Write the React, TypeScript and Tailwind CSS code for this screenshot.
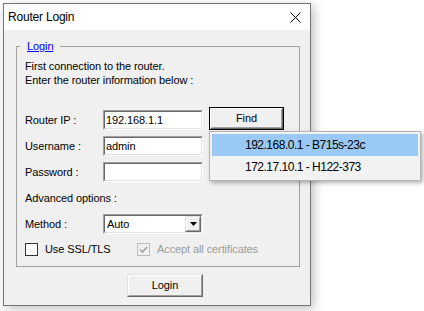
import React from "react";

const font = { fontFamily: '"Liberation Sans", Arial, sans-serif' };

function Sunken({ className = "", children }: { className?: string; children?: React.ReactNode }) {
  return (
    <div className={`border border-t-[#a0a0a0] border-l-[#a0a0a0] border-b-white border-r-white ${className}`}>
      <div className="h-full w-full border border-t-[#696969] border-l-[#696969] border-b-[#e3e3e3] border-r-[#e3e3e3] bg-white flex items-center">
        {children}
      </div>
    </div>
  );
}

function Raised({ className = "", children, focus = false }: { className?: string; children?: React.ReactNode; focus?: boolean }) {
  if (focus) {
    return (
      <div className={`border border-black ${className}`}>
        <div className="h-full w-full border border-t-white border-l-white border-b-[#696969] border-r-[#696969]">
          <div className="h-full w-full border border-t-[#f0f0f0] border-l-[#f0f0f0] border-b-[#a0a0a0] border-r-[#a0a0a0] bg-[#f0f0f0] flex items-center justify-center">
            {children}
          </div>
        </div>
      </div>
    );
  }
  return (
    <div className={`border border-t-[#e3e3e3] border-l-[#e3e3e3] border-b-[#696969] border-r-[#696969] ${className}`}>
      <div className="h-full w-full border border-t-white border-l-white border-b-[#a0a0a0] border-r-[#a0a0a0] bg-[#f0f0f0] flex items-center justify-center">
        {children}
      </div>
    </div>
  );
}

function Row({ label, children, mt = "mt-[6px]" }: { label: string; children?: React.ReactNode; mt?: string }) {
  return (
    <div className={`flex items-center h-[20px] ${mt}`}>
      <div className="w-[78px] shrink-0">{label}</div>
      {children}
    </div>
  );
}

export default function App() {
  return (
    <div className="relative w-[424px] h-[311px] bg-white pt-[3px] pl-[3px] text-[11px] leading-[13px] tracking-[-0.1px] text-black" style={font}>
      <div className="w-[308px] h-[303px] border border-[#767676] bg-[#f0f0f0] shadow-[3px_3px_10px_rgba(0,0,0,0.25)] flex flex-col">
        <div className="h-[26px] bg-white flex items-center justify-between shrink-0">
          <span className="pl-[4px] text-[12px] tracking-[-0.2px]">Router Login</span>
          <svg width="11" height="11" viewBox="0 0 11 11" className="mr-[9px]">
            <path d="M0.5 0.5 L10.5 10.5 M10.5 0.5 L0.5 10.5" stroke="#000" strokeWidth="1" />
          </svg>
        </div>
        <div className="pl-[12px] flex flex-col">
          <fieldset className="mt-[10px] w-[284px] border border-[#a0a0a0] px-[8px] pb-[7px]">
            <legend className="-ml-[5px] pl-[7px] pr-[7px] leading-[13px] text-[#0000ff] underline">Login</legend>
            <div className="pt-[6px] leading-[14px]">
              <div>First connection to the router.</div>
              <div>Enter the router information below :</div>
            </div>
            <Row label="Router IP :" mt="mt-[23px]">
              <Sunken className="w-[100px] h-[20px]">
                <span className="pl-[1px]">192.168.1.1</span>
              </Sunken>
              <Raised focus className="ml-[6px] w-[75px] h-[23px] mb-[3px]">
                <span>Find</span>
              </Raised>
            </Row>
            <Row label="Username :">
              <Sunken className="w-[100px] h-[20px]">
                <span className="pl-[1px]">admin</span>
              </Sunken>
            </Row>
            <Row label="Password :">
              <Sunken className="w-[100px] h-[20px]" />
            </Row>
            <div className="flex items-center h-[20px] mt-[6px]">Advanced options :</div>
            <Row label="Method :">
              <Sunken className="w-[100px] h-[20px]">
                <div className="flex-1 pl-[2px]">Auto</div>
                <Raised className="w-[16px] h-full">
                  <svg width="7" height="4" viewBox="0 0 7 4">
                    <path d="M0 0 H7 L3.5 4 Z" fill="#000" />
                  </svg>
                </Raised>
              </Sunken>
            </Row>
            <div className="flex items-center h-[19px] mt-[6px]">
              <div className="w-[112px] flex items-center shrink-0">
                <div className="w-[13px] h-[13px] border border-[#333333] bg-white shrink-0" />
                <span className="ml-[7px]">Use SSL/TLS</span>
              </div>
              <div className="flex items-center">
                <div className="w-[13px] h-[13px] border border-[#bcbcbc] bg-[#f0f0f0] shrink-0 flex items-center justify-center">
                  <svg width="9" height="8" viewBox="0 0 9 8">
                    <path d="M1 3.5 L3.5 6 L8 1" stroke="#a0a0a0" strokeWidth="1.6" fill="none" />
                  </svg>
                </div>
                <span className="ml-[7px] text-[#9b9b9b]">Accept all certificates</span>
              </div>
            </div>
          </fieldset>
          <Raised className="mt-[7px] ml-[111px] w-[76px] h-[23px]">
            <span>Login</span>
          </Raised>
        </div>
      </div>

      <div className="absolute left-[209px] top-[131px] w-[212px] h-[50px] border border-[#b4b4b4] bg-[#f2f2f2] p-[2px] shadow-[2px_2px_4px_rgba(0,0,0,0.3)] text-[12px] tracking-[-0.5px]">
        <div className="h-[22px] bg-[#99c9f4] flex items-center pl-[33px]">192.168.0.1 - B715s-23c</div>
        <div className="h-[22px] flex items-center pl-[33px]">172.17.10.1 - H122-373</div>
      </div>
    </div>
  );
}
